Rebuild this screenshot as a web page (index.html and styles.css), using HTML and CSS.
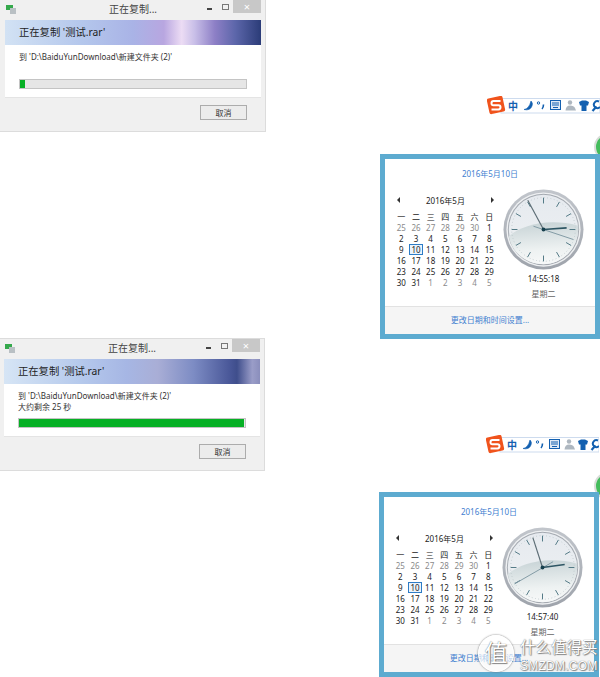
FILE: index.html
```html
<!DOCTYPE html>
<html lang="en">
<head>
  <meta charset="UTF-8" />
  <title>正在复制</title>
  <link rel="stylesheet" href="styles.css">
</head>
<body>

<svg class="defs" width="0" height="0">
  <defs>
    <linearGradient id="rimFill" x1="0" y1="0" x2="0" y2="1">
      <stop offset="0%" stop-color="#c2c6cc"/>
      <stop offset="100%" stop-color="#9ea3ab"/>
    </linearGradient>
    <linearGradient id="faceFill" x1="0" y1="0" x2="0" y2="1">
      <stop offset="0%" stop-color="#e6eaef"/>
      <stop offset="100%" stop-color="#eef1f3"/>
    </linearGradient>
    <linearGradient id="sheenFill" x1="0" y1="0" x2="0.1" y2="1">
      <stop offset="0%" stop-color="#c6d2d5"/>
      <stop offset="70%" stop-color="#eef2f2"/>
      <stop offset="100%" stop-color="#f6f8f8"/>
    </linearGradient>
    <symbol id="clockFace" viewBox="0 0 84 84">
      <circle cx="42" cy="42" r="41.500" fill="url(#rimFill)"/>
      <circle cx="42" cy="42" r="38.500" fill="#eef0f2"/>
      <circle cx="42" cy="42" r="37" fill="#a4a9b0"/>
      <circle cx="42" cy="42" r="36" fill="url(#faceFill)"/>
      <path d="M6 49 C20 37 48 30 78 38 C79 60 62 78 42 78 C24 78 9 66 6 49 Z" fill="url(#sheenFill)"/>
      <circle cx="42" cy="42" r="33" fill="none" stroke="#b8c4c8" stroke-width="1" stroke-dasharray="0.800 2.660"/>
      <g stroke="#4e7682" stroke-width="1">
        <path d="M42 9V15M42 69V75M9 42H15M69 42H75"/>
        <path d="M58.500 13.400L55.500 18.600M70.600 25.500L65.400 28.500M70.600 58.500L65.400 55.500M58.500 70.600L55.500 65.400M25.500 70.600L28.500 65.400M13.400 58.500L18.600 55.500M13.400 25.500L18.600 28.500M25.500 13.400L28.500 18.600"/>
      </g>
    </symbol>
    <symbol id="sogouBar" viewBox="0 0 113 19">
      <rect x="14" y="2.500" width="99" height="14.500" fill="#fff" stroke="#cddbee"/>
      <rect x="1" y="1" width="16" height="16" rx="2" fill="#f0531c" transform="rotate(-12 9 9)"/>
      <path d="M13.500 5H6.500Q4.500 5 4.500 7.200T6.500 9.300H11.500Q13.500 9.300 13.500 11.300T11.500 13.500H4.500" fill="none" stroke="#fff" stroke-width="2"/>
      <path d="M44 5A4.500 4.500 0 0 1 45 10Q43 15 37 13.500Q42 13 44 5Z" fill="#1360b0" stroke="#1360b0" stroke-width="0.600"/>
      <circle cx="51.500" cy="7" r="1.200" fill="none" stroke="#1360b0"/>
      <path d="M56.500 8.500Q56.500 11.500 55 13" fill="none" stroke="#1360b0" stroke-width="1.600"/>
      <rect x="63.500" y="4.500" width="10" height="9" fill="#dfeaf6" stroke="#1360b0"/>
      <path d="M65 7H72M65 9H72M66 11.500H71" stroke="#1360b0"/>
      <circle cx="83" cy="6.500" r="2.200" fill="#aeb7c0"/>
      <path d="M78.500 14.500Q79 9.500 83 9.500T88 12L89 14.500Z" fill="#aeb7c0"/>
      <path d="M92 6L95 4.500H99L102 6L101 9.500H99.500V15H94.500V9.500H93Z" fill="#1360b0"/>
      <path d="M105.500 15L109.500 10.500" stroke="#1360b0" stroke-width="2.200"/>
      <path d="M112 5.500A3.500 3.500 0 1 0 113 11" fill="none" stroke="#1360b0" stroke-width="2"/>
    </symbol>
  </defs>
</svg>

<div class="copy-win win-a">
  <div class="title-bar">
    <svg class="app-icon" width="10" height="9" viewBox="0 0 10 9"><rect width="7" height="5" fill="#35a94c"/><rect x="4" y="3" width="6" height="6" fill="#b9c0c4"/></svg>
    <span class="title-text">正在复制...</span>
    <span class="btn-min"></span>
    <span class="btn-max"></span>
    <span class="btn-close">×</span>
  </div>
  <div class="banner banner-early">正在复制 '测试.rar'</div>
  <div class="content">
    <p>到 'D:\BaiduYunDownload\新建文件夹 (2)'</p>
    <div class="progress"><div class="progress-fill" style="width: 2.200%"></div></div>
  </div>
  <div class="win-footer"><span class="cancel">取消</span></div>
</div>

<div class="copy-win win-b">
  <div class="title-bar">
    <svg class="app-icon" width="10" height="9" viewBox="0 0 10 9"><rect width="7" height="5" fill="#35a94c"/><rect x="4" y="3" width="6" height="6" fill="#b9c0c4"/></svg>
    <span class="title-text">正在复制...</span>
    <span class="btn-min"></span>
    <span class="btn-max"></span>
    <span class="btn-close">×</span>
  </div>
  <div class="banner banner-late">正在复制 '测试.rar'</div>
  <div class="content">
    <p>到 'D:\BaiduYunDownload\新建文件夹 (2)'</p>
    <p>大约剩余 25 秒</p>
    <div class="progress"><div class="progress-fill" style="width: 99.500%"></div></div>
  </div>
  <div class="win-footer"><span class="cancel">取消</span></div>
</div>

<!-- input method bars -->
<div class="tray tray-a"><span class="tray-zh">中</span><svg width="113" height="19"><use href="#sogouBar"/></svg></div>
<div class="tray tray-b"><span class="tray-zh">中</span><svg width="113" height="19"><use href="#sogouBar"/></svg></div>

<div class="green-dot dot-a"></div>
<div class="green-dot dot-b"></div>

<div class="cal cal-a">
  <div class="cal-date">2016年5月10日</div>
  <div class="cal-main">
    <div class="month">
      <div class="month-head"><span class="arrow-left"></span><span>2016年5月</span><span class="arrow-right"></span></div>
      <div class="days">
        <b>一</b><b>二</b><b>三</b><b>四</b><b>五</b><b>六</b><b>日</b>
        <i>25</i><i>26</i><i>27</i><i>28</i><i>29</i><i>30</i><span>1</span>
        <span>2</span><span>3</span><span>4</span><span>5</span><span>6</span><span>7</span><span>8</span>
        <span>9</span><span class="today">10</span><span>11</span><span>12</span><span>13</span><span>14</span><span>15</span>
        <span>16</span><span>17</span><span>18</span><span>19</span><span>20</span><span>21</span><span>22</span>
        <span>23</span><span>24</span><span>25</span><span>26</span><span>27</span><span>28</span><span>29</span>
        <span>30</span><span>31</span><i>1</i><i>2</i><i>3</i><i>4</i><i>5</i>
      </div>
    </div>
    <div class="clock-col">
      <svg class="clock" viewBox="0 0 84 84">
        <use href="#clockFace" width="84" height="84"/>
        <path d="M42 42L25.700 11.600" stroke="#5c6c74" stroke-width="1.200"/>
        <path d="M31.600 38.600L73 52.400" stroke="#7f98a2" stroke-width="1"/>
        <path d="M42 42L66 40.300" stroke="#2d5563" stroke-width="1.600"/>
        <circle cx="42" cy="42" r="2" fill="#17404e"/>
      </svg>
      <div class="clock-time">14:55:18</div>
      <div class="clock-day">星期二</div>
    </div>
  </div>
  <div class="cal-footer">更改日期和时间设置...</div>
</div>

<div class="cal cal-b">
  <div class="cal-date">2016年5月10日</div>
  <div class="cal-main">
    <div class="month">
      <div class="month-head"><span class="arrow-left"></span><span>2016年5月</span><span class="arrow-right"></span></div>
      <div class="days">
        <b>一</b><b>二</b><b>三</b><b>四</b><b>五</b><b>六</b><b>日</b>
        <i>25</i><i>26</i><i>27</i><i>28</i><i>29</i><i>30</i><span>1</span>
        <span>2</span><span>3</span><span>4</span><span>5</span><span>6</span><span>7</span><span>8</span>
        <span>9</span><span class="today">10</span><span>11</span><span>12</span><span>13</span><span>14</span><span>15</span>
        <span>16</span><span>17</span><span>18</span><span>19</span><span>20</span><span>21</span><span>22</span>
        <span>23</span><span>24</span><span>25</span><span>26</span><span>27</span><span>28</span><span>29</span>
        <span>30</span><span>31</span><i>1</i><i>2</i><i>3</i><i>4</i><i>5</i>
      </div>
    </div>
    <div class="clock-col">
      <svg class="clock" viewBox="0 0 84 84">
        <use href="#clockFace" width="84" height="84"/>
        <path d="M42 42L32 11" stroke="#5c6c74" stroke-width="1.200"/>
        <path d="M53 36L13 59" stroke="#7f98a2" stroke-width="1"/>
        <path d="M42 42L65 39" stroke="#2d5563" stroke-width="1.600"/>
        <circle cx="42" cy="42" r="2" fill="#17404e"/>
      </svg>
      <div class="clock-time">14:57:40</div>
      <div class="clock-day">星期二</div>
    </div>
  </div>
  <div class="cal-footer">更改日期和时间设置...</div>
</div>

<!-- site watermark -->
<div class="watermark">
  <span class="wm-seal">值</span>
  <div class="wm-text">
    <div class="wm-name">什么值得买</div>
    <div class="wm-url">SMZDM.COM</div>
  </div>
</div>

</body>
</html>
```

FILE: styles.css
```css
* {
  box-sizing: border-box;
}

html, body {
  margin: 0;
  height: 677px;
  overflow: hidden;
}

body {
  position: relative;
  width: 600px;
  background: #fff;
  color: #222;
  font-family: "Noto Sans", "Noto Sans CJK SC", sans-serif;
  font-size: 8px;
}

.defs {
  position: absolute;
}

/* copy dialogs */
.copy-win {
  position: absolute;
  display: flex;
  flex-direction: column;
  width: 267px;
  height: 133px;
  padding: 0 4px 5px 5px;
  background: #f0f0f0;
  border: 1px solid #dcdcdc;
}

.win-a {
  left: -1px;
  top: -1px;
}

.win-b {
  left: -2px;
  top: 338px;
}

.title-bar {
  position: relative;
  height: 20px;
  text-align: center;
  font-size: 10px;
  line-height: 19px;
  color: #444;
}

.app-icon {
  position: absolute;
  left: 1px;
  top: 5px;
}

.btn-min {
  position: absolute;
  right: 49px;
  top: 8px;
  width: 5px;
  height: 2px;
  background: #444;
}

.btn-max {
  position: absolute;
  right: 32px;
  top: 4px;
  width: 7px;
  height: 6px;
  border: 1px solid #777;
}

.btn-close {
  position: absolute;
  right: 0;
  top: 0;
  width: 28px;
  height: 13px;
  background: #c8c8c8;
  color: #fff;
  font-size: 11px;
  line-height: 13px;
}

.banner {
  height: 25px;
  padding-left: 14px;
  font-size: 10.300px;
  line-height: 25px;
  color: #1d1d1d;
}

.banner-early {
  background: linear-gradient(90deg, #d2e2f4 0%, #b4c7ec 30%, #a9b3e6 50%, #b8a6e0 62%, #ecdcf4 69%, #c9bfe8 74%, #8d7fc6 82%, #5c66aa 90%, #2b3c78 100%);
}

.banner-late {
  background: linear-gradient(90deg, #d6e5f5 0%, #b5c9ec 30%, #a6b6e4 48%, #a9aed6 60%, #7d8cc4 74%, #4a5899 88%, #3f4e8c 91%, #9a9dc8 97%, #8a8ebc 100%);
}

.content {
  display: flex;
  flex-direction: column;
  flex: 1;
  padding: 6px 14px 0;
  background: #fff;
  border-bottom: 1px solid #e4e4e4;
}

.content p {
  margin: 0;
  height: 11px;
  line-height: 11px;
  color: #333;
}

.progress {
  height: 10px;
  margin-top: auto;
  margin-bottom: 8px;
  background: #e6e6e6;
  border: 1px solid #c4c4c4;
}

.progress-fill {
  height: 100%;
  background: #06b025;
}

.win-footer {
  display: flex;
  justify-content: flex-end;
  align-items: center;
  height: 28px;
  padding-right: 14px;
}

.cancel {
  width: 47px;
  height: 15px;
  background: #ececec;
  border: 1px solid #acacac;
  text-align: center;
  line-height: 13px;
  color: #333;
}

/* input method bar */
.tray {
  position: absolute;
  width: 113px;
  height: 19px;
}

.tray-a {
  left: 487px;
  top: 96px;
}

.tray-b {
  left: 486px;
  top: 435px;
}

.tray svg {
  display: block;
}

.tray-zh {
  position: absolute;
  left: 21px;
  top: 1px;
  z-index: 1;
  font-size: 10px;
  font-weight: 700;
  line-height: 19px;
  color: #1360b0;
}

.green-dot {
  position: absolute;
  left: 594px;
  width: 28px;
  height: 28px;
  background: #44bc5c;
  border: 2px solid #d8dcd8;
  border-radius: 50%;
}

.dot-a {
  top: 133px;
}

.dot-b {
  top: 472px;
}

/* calendar flyout */
.cal {
  position: absolute;
  display: flex;
  flex-direction: column;
  width: 220px;
  height: 185px;
  background: #fff;
  border: 5px solid #5dabd0;
}

.cal-a {
  left: 380px;
  top: 154px;
}

.cal-b {
  left: 379px;
  top: 492px;
}

.cal-date {
  height: 30px;
  text-align: center;
  line-height: 29px;
  color: #3f80d0;
}

.cal-main {
  display: flex;
  flex: 1;
}

.month {
  width: 112px;
  padding-left: 9px;
}

.month-head {
  display: flex;
  justify-content: space-between;
  align-items: center;
  height: 22px;
  padding: 0 3px;
  line-height: 11px;
}

.arrow-left,
.arrow-right {
  width: 0;
  height: 0;
  border-top: 3px solid transparent;
  border-bottom: 3px solid transparent;
}

.arrow-left {
  border-right: 3px solid #333;
}

.arrow-right {
  border-left: 3px solid #333;
}

.days {
  display: grid;
  grid-template-columns: repeat(7, 14.660px);
  grid-auto-rows: 11px;
  text-align: center;
  line-height: 11px;
}

.days b {
  font-weight: 400;
}

.days i {
  font-style: normal;
  color: #8a8a8a;
}

.today {
  border: 1px solid #2d7cc6;
  background: #eaf3fb;
  line-height: 9px;
}

.clock-col {
  display: flex;
  flex-direction: column;
  align-items: center;
  width: 87px;
  margin-left: 3px;
}

.clock {
  width: 81px;
  height: 81px;
}

.clock-time {
  margin-top: 3px;
  line-height: 12px;
}

.clock-day {
  margin-top: 3px;
  line-height: 11px;
  color: #666;
}

.cal-footer {
  height: 28px;
  background: #f5f5f5;
  border-top: 1px solid #e2e2e2;
  text-align: center;
  line-height: 26px;
  color: #3f80d0;
}

/* watermark */
.watermark {
  position: absolute;
  left: 478px;
  top: 635px;
  display: flex;
  align-items: flex-start;
  gap: 6px;
  color: #fff;
  text-shadow: 0 0 1px #555, 1px 1px 1px #888;
}

.wm-seal {
  width: 36px;
  height: 37px;
  background: rgba(255, 255, 255, 0.6);
  border: 1px solid #fff;
  border-radius: 50%;
  box-shadow: 0 0 2px #666;
  text-align: center;
  font-size: 23px;
  line-height: 33px;
}

.wm-text {
  margin-top: 4px;
}

.wm-name {
  font-size: 15.500px;
  line-height: 17px;
}

.wm-url {
  margin-top: 3px;
  font-family: "Liberation Sans", sans-serif;
  font-size: 12px;
  line-height: 15px;
  letter-spacing: 0.250px;
}
```
